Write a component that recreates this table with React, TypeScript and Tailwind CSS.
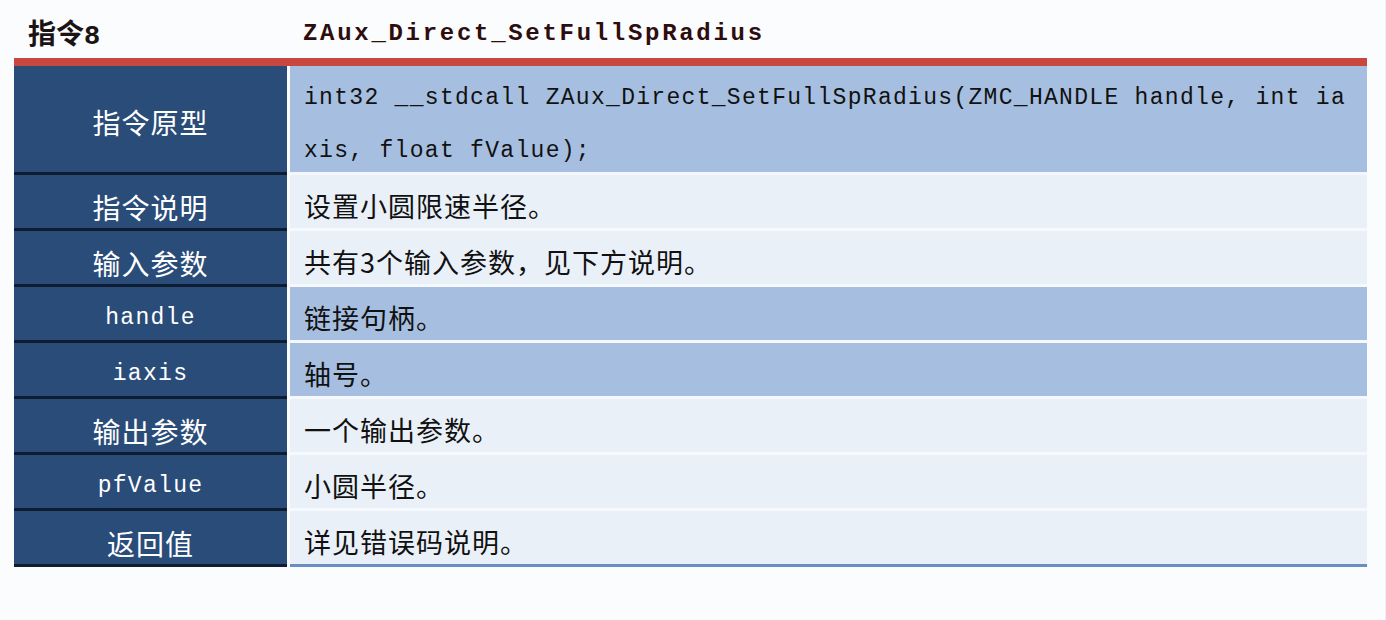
import React from "react";

const mono = "font-['Liberation_Mono','DejaVu_Sans_Mono',monospace]";
const cjk = "font-['Noto_Sans_CJK_SC','Noto_Sans',sans-serif]";

type Row = {
    label: string;
    monoLabel?: boolean;
    text: string;
    blue?: boolean;
};

const rows: Row[] = [
    { label: "指令说明", text: "设置小圆限速半径。" },
    { label: "输入参数", text: "共有3个输入参数，见下方说明。" },
    { label: "handle", monoLabel: true, text: "链接句柄。", blue: true },
    { label: "iaxis", monoLabel: true, text: "轴号。", blue: true },
    { label: "输出参数", text: "一个输出参数。" },
    { label: "pfValue", monoLabel: true, text: "小圆半径。" },
    { label: "返回值", text: "详见错误码说明。" },
];

export default function App() {
    return (
        <div className="min-h-[620px] w-full bg-[#fbfcfe] border-r border-[#eceff3]">
            <div className="w-[1353px] ml-[14px]">
                {/* title */}
                <div className="h-[58px] flex items-center pt-[10px]">
                    <div className={`w-[289px] pl-[14px] text-[28px] font-bold text-[#1c1414] ${cjk}`}>
                        指令<span className={`text-[27px] ${mono}`}>8</span>
                    </div>
                    <div className={`text-[24px] font-bold tracking-[2.7px] text-[#2e0d0d] ${mono}`}>
                        ZAux_Direct_SetFullSpRadius
                    </div>
                </div>
                <div className="h-[8px] bg-[#c8473f]" />

                {/* prototype row */}
                <div className="flex gap-[3px]">
                    <div
                        className={`w-[273px] h-[109px] shrink-0 bg-[#2a4c79] border-b-[3px] border-[#0f1d33] flex items-center justify-center pt-[6px] text-white text-[28px] tracking-[1px] ${cjk}`}
                    >
                        指令原型
                    </div>
                    <div className="flex-1 h-[109px] bg-[#a6bfe0] border-b-[3px] border-[#f3f6fb] pl-[14px] pt-[6px]">
                        <div className={`text-[23px] leading-[53px] tracking-[1.3px] text-[#111] whitespace-pre ${mono}`}>
                            <div>int32 __stdcall ZAux_Direct_SetFullSpRadius(ZMC_HANDLE handle, int ia</div>
                            <div>xis, float fValue);</div>
                        </div>
                    </div>
                </div>

                {rows.map((r, i) => {
                    const last = i === rows.length - 1;
                    return (
                        <div key={r.label} className="flex gap-[3px]">
                            <div
                                className={`w-[273px] h-[56px] shrink-0 bg-[#2a4c79] border-b-[3px] border-[#0f1d33] flex items-center justify-center pt-[10px] text-white ${
                                    r.monoLabel
                                        ? `text-[23px] tracking-[1.3px] ${mono}`
                                        : `text-[28px] tracking-[1px] ${cjk}`
                                }`}
                            >
                                {r.label}
                            </div>
                            <div
                                className={`flex-1 h-[56px] flex items-center pl-[14px] pt-[9px] text-[27px] tracking-[1px] text-[#111] ${cjk} ${
                                    r.blue ? "bg-[#a6bfe0]" : "bg-[#eaf0f8]"
                                } ${last ? "border-b-[3px] border-[#6a8ec2]" : "border-b-[3px] border-[#f5f8fc]"}`}
                            >
                                {r.text}
                            </div>
                        </div>
                    );
                })}
            </div>
        </div>
    );
}
